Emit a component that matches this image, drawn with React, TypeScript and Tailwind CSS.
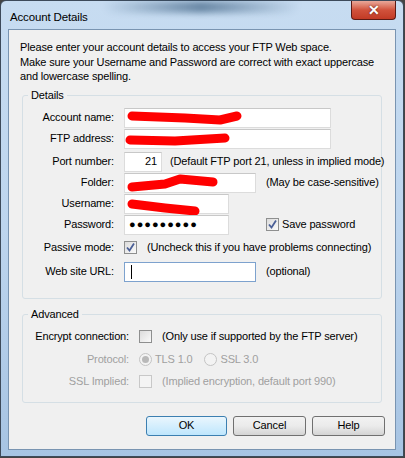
import type { ReactNode } from "react";

const FONT = { fontFamily: '"Liberation Sans", Arial, sans-serif' };

function Field({ w, children, focus }: { w: string; children?: ReactNode; focus?: boolean }) {
  return (
    <div
      className={[
        "relative h-[20px] bg-white border flex items-center px-1",
        w,
        focus ? "border-[#7da2ce]" : "border-[#dcdcdc] border-t-[#c8c8c8]",
      ].join(" ")}
    >
      {children}
    </div>
  );
}

function Scribble({ d, w, h }: { d: string; w: number; h: number }) {
  return (
    <svg width={w} height={h} className="absolute left-0 top-0" viewBox={`0 0 ${w} ${h}`}>
      <path d={d} stroke="#ff0000" strokeWidth={9} fill="none" strokeLinecap="round" strokeLinejoin="round" />
    </svg>
  );
}

function Check({ checked, disabled }: { checked?: boolean; disabled?: boolean }) {
  return (
    <div
      className={[
        "w-[13px] h-[13px] border flex items-center justify-center shrink-0",
        disabled ? "border-[#c8c8c8] bg-[#f4f4f4]" : "border-[#8e8f8f] bg-gradient-to-br from-[#dcdcdc] to-[#fafafa]",
      ].join(" ")}
    >
      {checked && (
        <svg width="11" height="11" viewBox="0 0 11 11">
          <path d="M2 5.5 L4.5 8.5 L9 1.5" stroke="#4a5f97" strokeWidth="1.8" fill="none" />
        </svg>
      )}
    </div>
  );
}

function Radio({ checked }: { checked?: boolean }) {
  return (
    <div className="w-[13px] h-[13px] rounded-full border border-[#c4c4c4] bg-[#f3f3f3] flex items-center justify-center shrink-0">
      {checked && <div className="w-[7px] h-[7px] rounded-full bg-[#b9b9b9]" />}
    </div>
  );
}

function Row({ label, top, children, lw = "w-[91px]", dim }: { label: string; top: string; children: ReactNode; lw?: string; dim?: boolean }) {
  return (
    <div className={["flex items-center h-[20px] whitespace-nowrap", top].join(" ")}>
      <div className={["text-right shrink-0", lw, dim ? "text-[#a0a0a0]" : ""].join(" ")}>{label}</div>
      <div className="ml-[10px] flex items-center">{children}</div>
    </div>
  );
}

function Group({ title, className, children }: { title: string; className: string; children: ReactNode }) {
  return (
    <div className={["relative mx-[13px] border border-[#d5dfe5] rounded-[3px]", className].join(" ")}>
      <div className="absolute -top-[8px] left-[5px] px-[3px] bg-[#f0f0f0] leading-[14px]">{title}</div>
      {children}
    </div>
  );
}

function Btn({ label, def }: { label: string; def?: boolean }) {
  return (
    <div
      className={[
        "h-[20px] flex items-center justify-center rounded-[3px] border bg-gradient-to-b",
        def
          ? "border-[#3c7fb1] from-[#eaf6fd] to-[#bee6fd] w-[81px]"
          : "border-[#707070] from-[#f2f2f2] via-[#ebebeb] to-[#d4d4d4] w-[73px]",
      ].join(" ")}
    >
      {label}
    </div>
  );
}

export default function App() {
  return (
    <div style={FONT} className="w-[405px] h-[458px] overflow-hidden bg-[#444] text-[11px] tracking-[-0.15px] text-black">
      <div className="relative w-[404px] h-[457px] rounded-t-[6px] border border-[#3d4a5a] bg-gradient-to-b from-[#c7dcf1] via-[#bdd5ee] to-[#a7c4e3] flex flex-col">
        <div className="absolute left-[100px] top-0 w-[200px] h-[12px] rounded-b-full bg-gradient-to-r from-transparent via-[#2a4f72] to-transparent opacity-60 blur-[3px]" />
        <div className="relative h-[28px] flex items-start">
          <div className="pl-[9px] pt-[8px] text-[11.5px] text-black">Account Details</div>
          <div className="ml-auto mr-[7px] w-[45px] h-[19px] rounded-b-[4px] border border-[#5b1a14] border-t-0 bg-gradient-to-b from-[#e8a89a] via-[#d1523c] to-[#c23a25] flex items-center justify-center">
            <span className="text-white font-bold text-[14px] leading-none [text-shadow:0_0_2px_#4a1008]">✕</span>
          </div>
        </div>
        <div className="mx-[7px] flex-1 mb-[6px] border border-[#7994b1] bg-[#f0f0f0] flex flex-col">
          <div className="pl-[11px] pt-[10px] leading-[14.5px] whitespace-nowrap">
            <div>Please enter your account details to access your FTP Web space.</div>
            <div>Make sure your Username and Password are correct with exact uppercase</div>
            <div>and lowercase spelling.</div>
          </div>

          <Group title="Details" className="mt-[11px] h-[204px]">
            <Row label="Account name:" top="mt-[12px]">
              <Field w="w-[207px]">
                <Scribble w={207} h={20} d="M7 7 L60 9 L95 11 L112 7" />
              </Field>
            </Row>
            <Row label="FTP address:" top="mt-[1px]">
              <Field w="w-[207px]">
                <Scribble w={207} h={20} d="M5 10 L50 11 L100 8" />
              </Field>
            </Row>
            <Row label="Port number:" top="mt-[3px]">
              <Field w="w-[38px]">
                <span className="ml-auto">21</span>
              </Field>
              <span className="ml-[8px]">(Default FTP port 21, unless in implied mode)</span>
            </Row>
            <Row label="Folder:" top="mt-[1px]">
              <Field w="w-[132px]">
                <Scribble w={132} h={20} d="M7 13 L40 10 L55 5 L88 8" />
              </Field>
              <span className="ml-[10px]">(May be case-sensitive)</span>
            </Row>
            <Row label="Username:" top="mt-[1px]">
              <Field w="w-[105px]">
                <Scribble w={105} h={24} d="M7 9 L40 13 L70 16" />
              </Field>
            </Row>
            <Row label="Password:" top="mt-[1px]">
              <Field w="w-[105px]">
                <span className="tracking-[1px] text-[11px] leading-none">●●●●●●●●●</span>
              </Field>
              <div className="ml-[37px] flex items-center gap-[3px]">
                <Check checked />
                <span>Save password</span>
              </div>
            </Row>
            <Row label="Passive mode:" top="mt-[3px]">
              <Check checked />
              <span className="ml-[10px]">(Uncheck this if you have problems connecting)</span>
            </Row>
            <Row label="Web site URL:" top="mt-[4px]">
              <Field w="w-[132px]" focus>
                <div className="w-px h-[14px] bg-black ml-[2px]" />
              </Field>
              <span className="ml-[10px]">(optional)</span>
            </Row>
          </Group>

          <Group title="Advanced" className="mt-[15px] h-[89px]">
            <Row label="Encrypt connection:" top="mt-[12px]" lw="w-[106px]">
              <Check />
              <span className="ml-[10px]">(Only use if supported by the FTP server)</span>
            </Row>
            <Row label="Protocol:" top="mt-[3px]" lw="w-[106px]" dim>
              <div className="flex items-center text-[#a0a0a0]">
                <Radio checked />
                <span className="ml-[3px]">TLS 1.0</span>
                <div className="ml-[12px]">
                  <Radio />
                </div>
                <span className="ml-[3px]">SSL 3.0</span>
              </div>
            </Row>
            <Row label="SSL Implied:" top="mt-[2px]" lw="w-[106px]" dim>
              <Check disabled />
              <span className="ml-[10px] text-[#a0a0a0]">(Implied encryption, default port 990)</span>
            </Row>
          </Group>

          <div className="flex justify-end gap-[6px] mr-[10px] mt-[13px]">
            <Btn label="OK" def />
            <Btn label="Cancel" />
            <Btn label="Help" />
          </div>
        </div>
      </div>
    </div>
  );
}
